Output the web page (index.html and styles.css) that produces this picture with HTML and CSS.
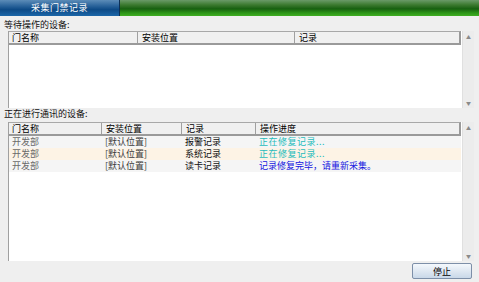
FILE: index.html
```html
<!DOCTYPE html>
<html>
<head>
<meta charset="utf-8">
<link rel="stylesheet" href="styles.css">
</head>
<body>
<div class="titlebar">
  <div class="tab">采集门禁记录</div>
  <div class="fill"></div>
</div>
<div class="label label-top">等待操作的设备:</div>
<div class="list list-wait">
  <div class="table">
    <div class="header cols-wait">
      <div class="hcell">门名称</div>
      <div class="hcell">安装位置</div>
      <div class="hcell">记录</div>
    </div>
  </div>
  <div class="scrollbar">
    <span class="arrow up">▲</span>
    <span class="arrow down">▼</span>
  </div>
</div>
<div class="label label-mid">正在进行通讯的设备:</div>
<div class="list list-run">
  <div class="table">
    <div class="header cols-run">
      <div class="hcell">门名称</div>
      <div class="hcell">安装位置</div>
      <div class="hcell">记录</div>
      <div class="hcell">操作进度</div>
    </div>
    <div class="row cols-run odd">
      <div class="cell c-dept">开发部</div>
      <div class="cell c-loc">[默认位置]</div>
      <div class="cell c-rec">报警记录</div>
      <div class="cell c-busy">正在修复记录...</div>
    </div>
    <div class="row cols-run even">
      <div class="cell c-dept">开发部</div>
      <div class="cell c-loc">[默认位置]</div>
      <div class="cell c-rec">系统记录</div>
      <div class="cell c-busy">正在修复记录...</div>
    </div>
    <div class="row cols-run odd">
      <div class="cell c-dept">开发部</div>
      <div class="cell c-loc">[默认位置]</div>
      <div class="cell c-rec">读卡记录</div>
      <div class="cell c-done">记录修复完毕，请重新采集。</div>
    </div>
  </div>
  <div class="scrollbar">
    <span class="arrow up">▲</span>
    <span class="arrow down">▼</span>
  </div>
</div>
<div class="footer">
  <button class="btn">停止</button>
</div>
</body>
</html>
```

FILE: styles.css
```css
* { box-sizing: border-box; }
html, body { margin: 0; padding: 0; }
body {
  width: 479px;
  height: 282px;
  overflow: hidden;
  background: #efefef;
  font-family: "Noto Sans CJK SC", "Liberation Sans", sans-serif;
  font-size: 9px;
  color: #111;
}
.titlebar {
  display: flex;
  height: 16px;
}
.tab {
  width: 120px;
  color: #fff;
  text-align: center;
  line-height: 15px;
  letter-spacing: 0.5px;
  background: linear-gradient(#5c8cb8 0%, #2c659c 35%, #0d4a86 60%, #1b66a8 100%);
  border-right: 1px solid #0c2f55;
}
.fill {
  flex: 1;
  background: linear-gradient(#6a9a68 0%, #3c7a30 30%, #176010 55%, #2c9418 80%, #3fae22 100%);
}
.label {
  padding-left: 4px;
  color: #111;
}
.label-top { height: 15px; line-height: 13px; padding-top: 2px; }
.label-mid { height: 14px; line-height: 12px; }
.list {
  display: flex;
  margin-left: 8px;
  margin-right: 5px;
  background: #fff;
  border-left: 1px solid #a0a0a0;
}
.list-wait { height: 77px; }
.list-run { height: 139px; }
.table {
  flex: 1;
  display: flex;
  flex-direction: column;
}
.scrollbar {
  width: 12px;
  margin-left: 1px;
  background: #ececec;
  border-left: 1px solid #e0e0e0;
  display: flex;
  flex-direction: column;
  justify-content: space-between;
  align-items: center;
  padding: 3px 0 2px;
}
.arrow {
  font-size: 5px;
  line-height: 6px;
  color: #8a8a8a;
}
.header {
  display: grid;
  height: 14px;
  background: #f0f0f0;
  border-top: 1px solid #a8a8a8;
  border-bottom: 2px solid #9a9a9a;
  border-right: 2px solid #9a9a9a;
}
.cols-wait { grid-template-columns: 128px 157px 1fr; }
.cols-run { grid-template-columns: 92px 80px 74px 1fr; }
.hcell {
  padding-left: 4px;
  line-height: 11px;
  border-left: 1px solid #a0a0a0;
  color: #000;
  white-space: nowrap;
}
.hcell:first-child { border-left: none; padding-left: 3px; }
.row {
  display: grid;
  height: 12px;
}
.row.odd { background: #f5f5f5; }
.row.even { background: #fdf3e5; }
.row .cell {
  padding-left: 4px;
  line-height: 12px;
  white-space: nowrap;
}
.row .cell:first-child { padding-left: 3px; }
.c-dept { color: #6a6a6a; }
.c-loc { color: #3a3a3a; }
.c-rec { color: #111; }
.c-busy { color: #1fbcbc; letter-spacing: 0.5px; }
.c-done { color: #1515e0; }
.footer {
  display: flex;
  justify-content: flex-end;
  padding: 2px 7px 0 0;
}
.btn {
  width: 60px;
  height: 16px;
  padding: 0;
  font-family: "Noto Sans CJK SC", "Liberation Sans", sans-serif;
  font-size: 9px;
  line-height: 13px;
  color: #000;
  border: 1px solid #7d8fa8;
  border-radius: 2px;
  background: linear-gradient(#f4f8fc 0%, #dfe8f2 50%, #c9d8e8 100%);
}
```
